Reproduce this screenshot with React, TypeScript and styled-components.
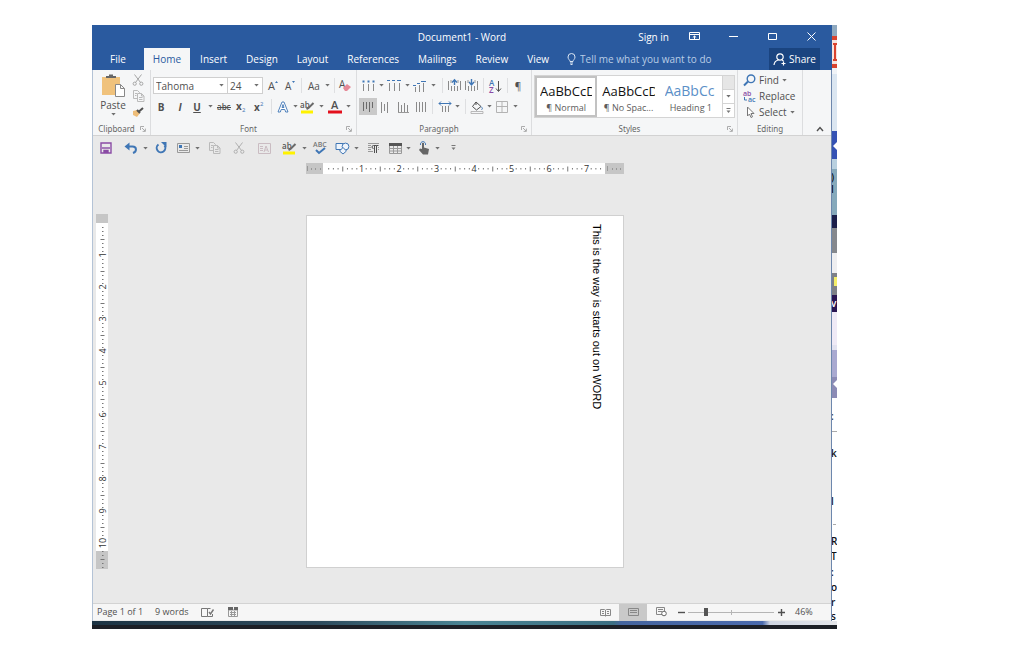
import React from "react";
import styled, { createGlobalStyle } from "styled-components";

const GlobalStyle = createGlobalStyle`
  *, *::before, *::after { box-sizing: border-box; }
  body { margin: 0; background: #fff; }
  button, input, select { font: inherit; color: inherit; }
`;

const blue = "#2a5a9f";
const ink = "#505050";
const accent = "#3f76b5";

/* ---------- frame ---------- */

const Desktop = styled.div`
  display: grid;
  grid-template-columns: minmax(0, 1fr) 5px;
  margin: 25px 187px 33px 92px;
  font-family: "Open Sans", "Noto Sans", sans-serif;
  font-size: 10px;
  line-height: 14px;
  color: ${ink};
  overflow: hidden;
`;

const AppWindow = styled.div`
  display: flex;
  flex-direction: column;
  min-width: 0;
  background: #e9e9e9;
  border-left: 1px solid #b4c3d6;
  border-right: 1px solid #6d87ad;
`;

const Backdrop = styled.div`
  overflow: hidden;
  svg { display: block; }
`;

const Taskbar = styled.div`
  grid-column: 1 / -1;
  height: 8px;
  border-bottom: 4px solid #1c1f26;
  background: linear-gradient(90deg, #1d3444 0, #2d4a5c 30%, #4a8494 50%, #3c6f83 70%, #45659f 71%, #4a6aae 90%, #cfd5e2 91%, #e4e6ea 100%);
`;

/* ---------- header ---------- */

const Header = styled.header`
  background: ${blue};
  color: #fff;
  margin: 0 -1px;
`;

const TitleBar = styled.div`
  display: grid;
  grid-template-columns: 1fr auto 1fr;
  align-items: center;
  height: 23px;
`;

const Title = styled.h1`
  grid-column: 2;
  margin: 0;
  font-size: 10px;
  font-weight: 400;
  line-height: 14px;
`;

const WindowTools = styled.div`
  display: flex;
  justify-content: flex-end;
  align-items: center;
  padding-right: 7px;
`;

const FlatButton = styled.button<{ $w?: number }>`
  display: flex;
  align-items: center;
  justify-content: center;
  flex: none;
  width: ${(p) => (p.$w ? p.$w + "px" : "auto")};
  height: 20px;
  padding: 0;
  border: 0;
  background: none;
  white-space: nowrap;
`;

const TabBar = styled.nav`
  display: flex;
  align-items: stretch;
  height: 22px;
`;

const Tab = styled.button<{ $active?: boolean; $wide?: boolean }>`
  flex: none;
  padding: 0 ${(p) => (p.$wide ? 18 : 9)}px;
  border: 0;
  background: ${(p) => (p.$active ? "#f5f6f7" : "none")};
  color: ${(p) => (p.$active ? blue : "#fff")};
  & + & { margin-right: 1px; }
`;

const TellMe = styled.label`
  display: flex;
  flex: 1;
  align-items: center;
  gap: 4px;
  min-width: 0;
  padding-left: 8px;
  color: #c8d8ec;
  input {
    flex: 1;
    min-width: 0;
    padding: 0;
    border: 0;
    outline: 0;
    background: none;
  }
  input::placeholder { color: #b9cde6; opacity: 1; }
`;

const Share = styled.button`
  display: flex;
  align-items: center;
  justify-content: center;
  gap: 2px;
  width: 51px;
  margin-right: 12px;
  padding: 0;
  border: 0;
  background: #1a4480;
`;

/* ---------- ribbon ---------- */

const Ribbon = styled.div`
  display: flex;
  height: 66px;
  background: #f5f6f7;
  border-bottom: 1px solid #d2d2d2;
`;

const Group = styled.section<{ $w: number }>`
  display: flex;
  flex-direction: column;
  flex: none;
  width: ${(p) => p.$w}px;
  padding: 0 2px;
  border-right: 1px solid #dcdddf;
`;

const GroupBody = styled.div<{ $high?: boolean }>`
  display: flex;
  flex-direction: column;
  height: 52px;
  padding-top: ${(p) => (p.$high ? 2 : 5)}px;
`;

const GroupFoot = styled.div`
  display: flex;
  align-items: center;
  height: 13px;
  color: #666;
  font-family: "Noto Sans", "Open Sans", sans-serif;
  font-size: 8px;
  line-height: 12px;
  h2 { flex: 1; margin: 0; font: inherit; text-align: center; }
`;

const ToolRow = styled.div`
  display: flex;
  align-items: center;
  height: 21px;
`;

const Tool = styled.button<{ $w: number; $gap?: number; $on?: boolean }>`
  display: flex;
  align-items: center;
  justify-content: center;
  flex: none;
  width: ${(p) => p.$w}px;
  height: 17px;
  margin-left: ${(p) => p.$gap ?? 0}px;
  padding: 0;
  border: 0;
  background: ${(p) => (p.$on ? "#c9c9c9" : "none")};
  white-space: nowrap;
`;

const Split = styled.span<{ $w: number }>`
  display: flex;
  flex: none;
  justify-content: center;
  width: ${(p) => p.$w}px;
  &::before { content: ""; width: 1px; height: 15px; background: #dedfe1; }
`;

const Combo = styled.label<{ $w: number }>`
  display: flex;
  align-items: center;
  flex: none;
  width: ${(p) => p.$w}px;
  height: 17px;
  padding-right: 3px;
  border: 1px solid #cfcfcf;
  background: #fff;
  & + & { border-left: 0; }
  select {
    flex: 1;
    min-width: 0;
    padding: 0 2px;
    border: 0;
    appearance: none;
    background: none;
    line-height: 14px;
  }
`;

const ClipRow = styled.div`
  display: flex;
  gap: 2px;
  padding-left: 2px;
`;

const Paste = styled.button`
  display: flex;
  flex-direction: column;
  align-items: center;
  width: 32px;
  padding: 2px 0 0;
  border: 0;
  background: none;
  line-height: 15px;
`;

const ClipTools = styled.div`
  display: flex;
  flex-direction: column;
  button { height: 16px; }
`;

const Gallery = styled.div`
  display: flex;
  height: 43px;
  background: #fff;
  border: 1px solid #d4d4d4;
`;

const StyleCard = styled.button<{ $on?: boolean; $heading?: boolean }>`
  flex: 1;
  min-width: 0;
  padding: 4px 3px 0;
  border: 2px solid ${(p) => (p.$on ? "#c2c2c2" : "transparent")};
  background: none;
  overflow: hidden;
  text-align: center;
  strong {
    display: block;
    overflow: hidden;
    white-space: nowrap;
    text-align: left;
    font-weight: 400;
    font-size: ${(p) => (p.$heading ? 14 : 13)}px;
    line-height: 18px;
    color: ${(p) => (p.$heading ? "#5b8fc7" : "#111")};
  }
  span { display: block; white-space: nowrap; font-size: 9px; line-height: 15px; color: #5c5c5c; }
`;

const GalleryScroll = styled.div`
  display: flex;
  flex-direction: column;
  width: 12px;
  border-left: 1px solid #d4d4d4;
  button {
    display: flex;
    flex: 1;
    align-items: center;
    justify-content: center;
    padding: 0;
    border: 0;
    background: #fff;
  }
  button + button { border-top: 1px solid #d4d4d4; }
  button:first-child { background: #e6e6e6; }
`;

const EditTool = styled.button`
  display: flex;
  align-items: center;
  gap: 3px;
  height: 16px;
  padding: 0 3px;
  border: 0;
  background: none;
`;

const Collapse = styled.div`
  display: flex;
  flex: 1;
  align-items: flex-end;
  justify-content: flex-end;
  padding-right: 3px;
  button { height: 13px; }
`;

/* ---------- quick access ---------- */

const QuickBar = styled.div`
  display: flex;
  align-items: center;
  height: 24px;
  padding-left: 3px;
`;

/* ---------- workspace ---------- */

const Workspace = styled.main`
  display: grid;
  grid-template-columns: 15px minmax(0, 1fr);
  padding: 3px 10px 34px 0;
  svg { display: block; }
`;

const SideRuler = styled.div`
  padding: 51px 0 0 3px;
`;

const Canvas = styled.div`
  display: flex;
  flex-direction: column;
  align-items: center;
  gap: 41px;
`;

const Page = styled.article`
  width: 318px;
  height: 353px;
  padding: 8px 19px;
  border: 1px solid #d0d0d0;
  background: #fff;
  writing-mode: vertical-rl;
  font-family: "Liberation Sans", Arial, sans-serif;
  font-size: 11px;
  line-height: 14px;
  color: #000;
  p { margin: 0; white-space: nowrap; }
`;

/* ---------- status bar ---------- */

const StatusBar = styled.footer`
  display: flex;
  align-items: center;
  height: 17px;
  padding-left: 4px;
  border-top: 1px solid #d3d3d3;
  background: #f6f6f6;
  font-size: 9px;
  line-height: 14px;
`;

const StatusText = styled.span`
  margin-right: 12px;
  white-space: nowrap;
`;

const Spacer = styled.span`
  flex: 1;
`;

const Zoom = styled.input`
  appearance: none;
  width: 86px;
  height: 12px;
  margin: 0 1px;
  background: linear-gradient(#b5b5b5, #b5b5b5) center / 100% 1px no-repeat,
    linear-gradient(#b5b5b5, #b5b5b5) center / 1px 5px no-repeat;
  &::-webkit-slider-thumb {
    appearance: none;
    width: 4px;
    height: 8px;
    background: #555;
  }
`;

const ZoomValue = styled.span`
  width: 44px;
  padding-left: 8px;
`;

/* ---------- drawings ---------- */

const Drawing = styled.svg`
  flex: none;
  overflow: visible;
`;

type GlyphProps = { w?: number; h?: number; children: React.ReactNode; c?: string; s?: number };
const Glyph = ({ w = 14, h = 14, c = ink, s = 1, children }: GlyphProps) => (
  <Drawing width={w} height={h} viewBox={`0 0 ${w} ${h}`} fill="none" stroke={c} strokeWidth={s} aria-hidden="true">
    {children}
  </Drawing>
);

const Caret = () => (
  <Drawing width="5" height="3" viewBox="0 0 5 3" aria-hidden="true">
    <path d="M.3 0h4.400L2.500 2.500z" fill="#707070" />
  </Drawing>
);

const MoreMark = () => (
  <Glyph w={5} h={6} c="#777">
    <path d="M.5.500h4" />
    <path d="M.5 2.500h4L2.500 5z" fill="#777" stroke="none" />
  </Glyph>
);

const Launcher = () => (
  <Glyph w={6} h={6} c="#999" s={0.8}>
    <path d="M.5 4V.5H4M2 2l3 3M5.400 2.600v2.800H2.600" />
  </Glyph>
);

const Scissors = ({ c = "#a6a6a6" }: { c?: string }) => (
  <Glyph w={12} h={12} c={c}>
    <path d="M2.500.500 8.500 8.500M9.500.500 3.500 8.500" />
    <circle cx="2.700" cy="9.700" r="1.600" />
    <circle cx="9.300" cy="9.700" r="1.600" />
  </Glyph>
);

const Copy = () => (
  <Glyph w={13} h={12} c="#bababa">
    <path d="M5 8.500H1.500v-8h4l2 2V3M5.500 3.500h4l2.500 2.500v5.500H5.500zM9.500 3.500V6H12M3 3.500h2M3 5.500h1.500M7 7.500h3.500M7 9.500h3.500" />
  </Glyph>
);

const Highlighter = () => (
  <Glyph w={14} h={14}>
    <path d="M0 10.500h12v3H0z" fill="#fff200" stroke="none" />
    <text x="-1" y="8" fontSize="8" fontWeight="600" fill="#555" stroke="none">ab</text>
    <path d="M12.500 3 7.500 8l-2 1" stroke="#6a6a6a" strokeWidth="2" />
  </Glyph>
);

const bars = (list: number[][], color = "#8a8a8a") =>
  list.map(([x, y1, y2], i) => <path key={i} d={`M${x + 0.5} ${y1}V${y2}`} stroke={color} />);

const BulletList = () => (
  <Glyph>
    {bars([[2, 5, 12], [7, 5, 12], [12, 5, 12]])}
    <path d="M1.500 1.500h2v2h-2zM6.500 1.500h2v2h-2zM11.500 1.500h2v2h-2z" fill={accent} stroke="none" />
  </Glyph>
);
const NumberList = () => (
  <Glyph>
    {bars([[2, 4, 12], [7, 4, 12], [12, 4, 12]])}
    <path d="M0 1.500h3M5 1.500h3M10 1.500h4" stroke={accent} />
  </Glyph>
);
const MultiList = () => (
  <Glyph>
    {bars([[2, 8, 13], [6, 6, 13], [10, 4, 13]])}
    <path d="M0 6.500h3M4 4.500h3M8 2.500h5" stroke={accent} />
  </Glyph>
);
const Indent = ({ down }: { down?: boolean }) => (
  <Glyph w={13}>
    {bars([[0, 2, 11], [3, 7, 12], [6, 7, 12], [9, 7, 12], [12, 2, 11]])}
    <path d={down ? "M6.500 0v5.500M4 3l2.500 3L9 3" : "M6.500 6V1M4 3.500 6.500.8 9 3.500"} stroke={accent} strokeWidth="1.400" />
    <path d="M3 1v3M10 1v3" stroke="#999" />
  </Glyph>
);

const Save = () => (
  <Glyph w={12} h={12} c="#8a4ba5" s={1.400}>
    <path d="M1 1h10v10H1z" />
    <path d="M2 6h8" />
    <path d="M4 11V8.500h4V11" fill="#8a4ba5" />
  </Glyph>
);

const Shapes = () => (
  <Glyph w={15} h={14} c={accent}>
    <path d="M1 2.500h8v6H1z" fill="#eef4fb" />
    <circle cx="10.500" cy="5.500" r="3.400" fill="#eef4fb" />
    <path d="M8 6.500 11.500 10 8 13 4.500 10z" fill="#eef4fb" />
  </Glyph>
);

const TopRuler = () => {
  const unit = 37.5;
  const marks = [];
  for (let i = 1; i < 60; i++) {
    const x = 18 + (i * unit) / 8;
    if (i % 8 === 0) {
      marks.push(<text key={i} x={x} y="9" textAnchor="middle" fontSize="9" fill="#333">{i / 8}</text>);
    } else {
      const half = i % 4 === 0;
      marks.push(<path key={i} d={`M${x} ${half ? 3.5 : 5}v${half ? 5 : 1.5}`} stroke="#777" />);
    }
  }
  return (
    <svg width="318" height="11" viewBox="0 0 318 11" role="img" aria-label="Horizontal ruler">
      <path d="M0 0h318v11H0z" fill="#fff" />
      <path d="M0 0h17v11H0zM299 0h19v11h-19z" fill="#c6c6c6" />
      <path d="M1.500 3v5M5.500 5v2M9.500 5v2M14.500 5v2M301.500 3v5M306.500 5v2M310.500 5v2M314.500 5v2" stroke="#999" />
      {marks}
    </svg>
  );
};

const LeftRuler = () => {
  const unit = 32;
  const marks = [];
  for (let i = 1; i < 87; i++) {
    const y = 9 + (i * unit) / 8;
    if (i % 8 === 0) {
      marks.push(
        <text key={i} transform={`translate(10 ${y}) rotate(-90)`} textAnchor="middle" fontSize="9" fill="#333">{i / 8}</text>
      );
    } else if (i !== 79 && i !== 81) {
      const half = i % 4 === 0;
      marks.push(<path key={i} d={`M${half ? 4.5 : 6} ${y + 0.5}h${half ? 4 : 1.5}`} stroke="#777" />);
    }
  }
  return (
    <svg width="12" height="355" viewBox="0 0 12 355" role="img" aria-label="Vertical ruler">
      <path d="M0 0h12v355H0z" fill="#fff" />
      <path d="M0 0h12v9H0zM0 337h12v18H0z" fill="#c6c6c6" />
      {marks}
    </svg>
  );
};

const backdropBands: [number, number, string][] = [
  [0, 11, "#8fa9bf"], [11, 4, "#d9432f"], [15, 24, "#f6e3df"], [39, 4, "#d9432f"], [43, 6, "#f0f3f7"],
  [49, 57, "#dbe6f1"], [106, 28, "#3552b4"], [134, 10, "#b9d0df"], [144, 46, "#86a9bb"], [190, 13, "#1b1e4a"],
  [203, 25, "#85888d"], [228, 20, "#eeeef0"], [248, 22, "#7e8187"], [270, 17, "#2a1652"], [287, 33, "#efeaf6"],
  [320, 5, "#e2e2f0"], [325, 27, "#a9a9d0"], [352, 21, "#8c8bb5"], [373, 223, "#ffffff"],
];
const backdropText: [number, string, string][] = [
  [156, ")", "#111"], [168, "l", "#111"], [282, "v", "#fff"], [395, ":", "#333"], [432, "k", "#111"], [480, "l", "#222"],
  [520, "R", "#111"], [535, "T", "#111"], [551, ":", "#111"], [566, "o", "#111"], [581, "r", "#111"], [595, "s", "#111"],
];

const BackdropArt = () => (
  <svg width="5" height="596" viewBox="0 0 5 596" aria-hidden="true">
    {backdropBands.map(([y, h, c]) => <path key={y} d={`M0 ${y}h5v${h}H0z`} fill={c} />)}
    <path d="M1 19h4M1 35h4M3 19v16" stroke="#d9432f" strokeWidth="2" />
    <path d="M5 117 1 121l4 4zM5 355l-4 4 4 4z" fill="#fff" />
    <path d="M2 252h3v9H2z" fill="#f3ee6a" />
    <path d="M0 406.500h5M1 499.500h3" stroke="#aaa" />
    {backdropText.map(([y, t, c]) => (
      <text key={y} x="-1" y={y} fontSize="10" fontWeight="600" fill={c}>{t}</text>
    ))}
  </svg>
);

/* ---------- app ---------- */

const DropTool = ({ w = 8, gap, label }: { w?: number; gap?: number; label: string }) => (
  <Tool $w={w} $gap={gap} aria-label={label}><Caret /></Tool>
);

const tabs = ["File", "Home", "Insert", "Design", "Layout", "References", "Mailings", "Review", "View"];

const Foot = ({ label, launcher = true }: { label: string; launcher?: boolean }) => (
  <GroupFoot>
    <h2>{label}</h2>
    {launcher && <Tool $w={10} aria-label={`${label} settings`}><Launcher /></Tool>}
  </GroupFoot>
);

export default function App() {
  return (
    <>
      <GlobalStyle />
      <Desktop>
        <AppWindow>
          <Header>
            <TitleBar>
              <Title>Document1 - Word</Title>
              <WindowTools>
                <FlatButton>Sign in</FlatButton>
                <FlatButton $w={50} aria-label="Ribbon display options">
                  <Glyph w={11} h={9} c="#fff"><path d="M.5.500h10v7H.5zM.5 2.500h10M5.500 7V4M3.800 5.500 5.500 4l1.700 1.500" /></Glyph>
                </FlatButton>
                <FlatButton $w={29} aria-label="Minimize"><Glyph w={9} h={9} c="#fff"><path d="M0 4.500h9" /></Glyph></FlatButton>
                <FlatButton $w={49} aria-label="Maximize"><Glyph w={9} h={9} c="#fff"><path d="M.5 1.500h8v6H.5z" /></Glyph></FlatButton>
                <FlatButton $w={28} aria-label="Close"><Glyph w={9} h={9} c="#fff"><path d="m.5.500 8 8M8.500.500l-8 8" /></Glyph></FlatButton>
              </WindowTools>
            </TitleBar>
            <TabBar>
              {tabs.map((t) => <Tab key={t} $active={t === "Home"} $wide={t === "File"}>{t}</Tab>)}
              <TellMe>
                <Glyph w={9} h={12} c="#dbe6f3"><path d="M3 8.500C3 7 1 6.300 1 4a3.500 3.500 0 0 1 7 0c0 2.300-2 3-2 4.500zM3 10h3M3.500 11.500h2" /></Glyph>
                <input aria-label="Tell me what you want to do" placeholder="Tell me what you want to do" />
              </TellMe>
              <Share>
                <Glyph w={14} h={13} c="#fff" s={1.200}><circle cx="7" cy="4" r="3.200" /><path d="M1 12c.3-3 2-4.500 4.500-5M9 7l1.500 1M10.500 8.500v4M8.500 10.500h4" /></Glyph>
                Share
              </Share>
            </TabBar>
          </Header>

          <Ribbon>
            <Group $w={58}>
              <GroupBody $high>
                <ClipRow>
                  <Paste>
                    <Glyph w={24} h={24}>
                      <path d="M1 3h18v18H1z" fill="#f0c27c" stroke="none" />
                      <path d="M5 4V2h3V.5h4V2h3v2z" fill="#666" stroke="none" />
                      <path d="M14.500 10.500h5l4 4v8h-9zM19.500 10.500v4h4" fill="#fff" stroke="#888" />
                    </Glyph>
                    Paste
                    <Caret />
                  </Paste>
                  <ClipTools>
                    <Tool $w={14} aria-label="Cut"><Scissors /></Tool>
                    <Tool $w={14} aria-label="Copy"><Copy /></Tool>
                    <Tool $w={14} aria-label="Format painter">
                      <Glyph w={12} h={10}><path d="M1 4 5 3l3 3-3 4-4-2z" fill="#eebd78" stroke="none" /><path d="m5 3 3 3M7 4.500 11 1" strokeWidth="2" /></Glyph>
                    </Tool>
                  </ClipTools>
                </ClipRow>
              </GroupBody>
              <Foot label="Clipboard" />
            </Group>

            <Group $w={206}>
              <GroupBody>
                <ToolRow>
                  <Combo $w={75}><select aria-label="Font"><option>Tahoma</option></select><Caret /></Combo>
                  <Combo $w={35}><select aria-label="Font size"><option>24</option></select><Caret /></Combo>
                  <Tool $w={20} aria-label="Grow font"><Glyph w={10}><text x="0" y="11" fontSize="11" fill={ink} stroke="none">A</text><path d="m7 4 1.500-2L10 4z" fill={accent} stroke="none" /></Glyph></Tool>
                  <Tool $w={14} aria-label="Shrink font"><Glyph w={10}><text x="0" y="11" fontSize="10" fill={ink} stroke="none">A</text><path d="m7 2 1.500 2L10 2z" fill={accent} stroke="none" /></Glyph></Tool>
                  <Split $w={8} />
                  <Tool $w={18}>Aa</Tool>
                  <DropTool label="Change case" />
                  <Split $w={6} />
                  <Tool $w={16} aria-label="Clear formatting">
                    <Glyph w={12}><text x="0" y="9" fontSize="10" fill={ink} stroke="none">A</text><path d="m4 9 4-4 4 3-4 4H6z" fill="#e58a98" stroke="none" /></Glyph>
                  </Tool>
                </ToolRow>
                <ToolRow>
                  <Tool $w={16}><b>B</b></Tool>
                  <Tool $w={22}><b><i>I</i></b></Tool>
                  <Tool $w={12}><b><u>U</u></b></Tool>
                  <DropTool w={14} label="Underline style" />
                  <Tool $w={14} aria-label="Strikethrough"><Glyph><text x="0" y="10" fontSize="8" fontWeight="600" fill={ink} stroke="none">abc</text><path d="M0 7.500h14" /></Glyph></Tool>
                  <Tool $w={20} aria-label="Subscript"><Glyph w={10}><text x="0" y="10" fontSize="10" fontWeight="700" fill={ink} stroke="none">x</text><text x="6" y="12" fontSize="6" fill={accent} stroke="none">2</text></Glyph></Tool>
                  <Tool $w={16} aria-label="Superscript"><Glyph w={10}><text x="0" y="11" fontSize="10" fontWeight="700" fill={ink} stroke="none">x</text><text x="6" y="6" fontSize="6" fill={accent} stroke="none">2</text></Glyph></Tool>
                  <Split $w={8} />
                  <Tool $w={16} aria-label="Text effects"><Glyph w={12} c={accent}><path d="M1 12 5 2h2l4 10H8.700L7.800 9.500H4.200L3.300 12zM5 7.500h2L6 4.500z" fill="#fff" strokeWidth=".9" /></Glyph></Tool>
                  <DropTool label="Text effects menu" />
                  <Tool $w={18} aria-label="Highlight"><Highlighter /></Tool>
                  <DropTool label="Highlight colour" />
                  <Tool $w={20} aria-label="Font colour"><Glyph><text x="3" y="9" fontSize="11" fontWeight="600" fill={ink} stroke="none">A</text><path d="M0 10.500h14v3H0z" fill="#e3101c" stroke="none" /></Glyph></Tool>
                  <DropTool w={6} label="Font colour menu" />
                </ToolRow>
              </GroupBody>
              <Foot label="Font" />
            </Group>

            <Group $w={175}>
              <GroupBody>
                <ToolRow>
                  <Tool $w={18} aria-label="Bullets"><BulletList /></Tool>
                  <DropTool label="Bullet styles" />
                  <Tool $w={18} aria-label="Numbering"><NumberList /></Tool>
                  <DropTool label="Numbering styles" />
                  <Tool $w={18} aria-label="Multilevel list"><MultiList /></Tool>
                  <DropTool label="List styles" />
                  <Split $w={10} />
                  <Tool $w={14} aria-label="Decrease indent"><Indent /></Tool>
                  <Tool $w={20} aria-label="Increase indent"><Indent down /></Tool>
                  <Split $w={4} />
                  <Tool $w={20} aria-label="Sort">
                    <Glyph w={12}><text x="0" y="7" fontSize="8" fontWeight="600" fill={accent} stroke="none">A</text><text x="0" y="14" fontSize="8" fontWeight="600" fill="#8a4ba5" stroke="none">Z</text><path d="M9.500 2v10M7 9.500l2.500 3 2.500-3" /></Glyph>
                  </Tool>
                  <Split $w={4} />
                  <Tool $w={18}>¶</Tool>
                </ToolRow>
                <ToolRow>
                  <Tool $w={18} $on aria-label="Align top"><Glyph w={12}>{bars([[1, 2, 11], [4, 2, 9], [7, 2, 12], [10, 2, 8]], "#6a6a6a")}</Glyph></Tool>
                  <Tool $w={16} aria-label="Align middle"><Glyph w={10}>{bars([[1, 2, 13], [4, 4, 11], [7, 2, 13]])}</Glyph></Tool>
                  <Tool $w={20} aria-label="Align bottom"><Glyph w={13}>{bars([[1, 2, 12], [4, 5, 12], [7, 3, 12], [10, 5, 12]])}<path d="M1 12.500h11" stroke="#999" /></Glyph></Tool>
                  <Tool $w={14} aria-label="Justify"><Glyph w={11}>{bars([[1, 2, 12], [4, 2, 12], [7, 2, 12], [10, 2, 12]])}</Glyph></Tool>
                  <Split $w={10} />
                  <Tool $w={16} aria-label="Line spacing"><Glyph w={14}>{bars([[4, 6, 12], [7, 6, 12], [10, 6, 12]])}<path d="M1 3.500h12M3 1.500l-2 2 2 2M11 1.500l2 2-2 2" stroke={accent} /></Glyph></Tool>
                  <DropTool label="Spacing options" />
                  <Split $w={8} />
                  <Tool $w={16} aria-label="Shading"><Glyph><path d="m6 2 5 4.500L6.500 10 2.500 6.500zM6 2v3" /><path d="M11 6.500c2 2 1.500 3 .5 3" stroke={accent} /><path d="M1 11.500h12v2H1z" stroke="#aaa" strokeWidth=".8" /></Glyph></Tool>
                  <DropTool label="Shading colour" />
                  <Tool $w={18} aria-label="Borders"><Glyph w={12} h={12} c="#b3b3b3"><path d="M.5.500h11v11H.5zM.5 5.500h11M6 .5v11" /></Glyph></Tool>
                  <DropTool label="Border styles" />
                </ToolRow>
              </GroupBody>
              <Foot label="Paragraph" />
            </Group>

            <Group $w={206}>
              <GroupBody>
                <Gallery>
                  <StyleCard $on><strong>AaBbCcD</strong><span>¶ Normal</span></StyleCard>
                  <StyleCard><strong>AaBbCcD</strong><span>¶ No Spac...</span></StyleCard>
                  <StyleCard $heading><strong>AaBbCc</strong><span>Heading 1</span></StyleCard>
                  <GalleryScroll>
                    <button aria-label="Previous styles" />
                    <button aria-label="Next styles"><Caret /></button>
                    <button aria-label="More styles"><MoreMark /></button>
                  </GalleryScroll>
                </Gallery>
              </GroupBody>
              <Foot label="Styles" />
            </Group>

            <Group $w={65}>
              <GroupBody $high>
                <EditTool>
                  <Glyph w={13} h={12} c={accent} s={1.400}><circle cx="8" cy="4.800" r="3.800" /><path d="m5 7.500-4 4" strokeWidth="2" /></Glyph>
                  <span>Find</span><Caret />
                </EditTool>
                <EditTool>
                  <Glyph w={13} h={13}><text x="0" y="6" fontSize="7" fontWeight="600" fill="#8a4ba5" stroke="none">ab</text><text x="5" y="12" fontSize="7" fontWeight="600" fill={accent} stroke="none">ac</text><path d="M1.500 7v3H4" stroke={accent} /></Glyph>
                  <span>Replace</span>
                </EditTool>
                <EditTool>
                  <Glyph w={13} h={12} c="#777"><path d="M4.500 1v9l2-2 1.500 3.500 1.500-.700L8 7.500h3z" fill="#fff" /></Glyph>
                  <span>Select</span><Caret />
                </EditTool>
              </GroupBody>
              <Foot label="Editing" launcher={false} />
            </Group>
            <Collapse>
              <Tool $w={16} aria-label="Collapse the ribbon"><Glyph w={8} h={6} s={1.400}><path d="m1 5 3-3.500L7 5" /></Glyph></Tool>
            </Collapse>
          </Ribbon>

          <QuickBar>
            <Tool $w={20} aria-label="Save"><Save /></Tool>
            <Tool $w={14} $gap={8} aria-label="Undo"><Glyph c={accent} s={2}><path d="M3 5.500h5.500c4.500 0 4.500 5 .5 6.500" /><path d="M5.500 1.500v8L.5 5.500z" fill={accent} stroke="none" /></Glyph></Tool>
            <DropTool gap={3} label="Undo history" />
            <Tool $w={14} $gap={5} aria-label="Redo"><Glyph c={accent} s={2}><path d="M4.500 3.500a4.300 4.300 0 1 0 6 1" /><path d="M7 1h5.500v5.500z" fill={accent} stroke="none" /></Glyph></Tool>
            <Tool $w={14} $gap={8} aria-label="Text box"><Glyph w={13} h={10} c="#999"><path d="M.5.500h12v9H.5zM7 3.500h4M7 5.500h4M2 7.500h9" /><path d="M2 2h3v3H2z" fill={accent} stroke="none" /></Glyph></Tool>
            <DropTool gap={3} label="Text box styles" />
            <Tool $w={14} $gap={6} aria-label="Copy"><Copy /></Tool>
            <Tool $w={14} $gap={11} aria-label="Cut"><Scissors c="#b0b0b0" /></Tool>
            <Tool $w={14} $gap={11} aria-label="Frame text"><Glyph w={13} h={11} c="#cabcc2"><path d="M.5.500h12v10H.5zM2 3.500h3M2 5.500h3M2 7.500h3M6 9l2-6 2.500 6M7 7h2.500" /></Glyph></Tool>
            <Tool $w={16} $gap={11} aria-label="Highlight"><Highlighter /></Tool>
            <DropTool gap={2} label="Highlight colour" />
            <Tool $w={14} $gap={5} aria-label="Spelling"><Glyph w={14} h={14}><text x="0" y="6" fontSize="7" fontWeight="600" fill="#777" stroke="none">ABC</text><path d="m3 9 3 3 6-5" stroke={accent} strokeWidth="2" /></Glyph></Tool>
            <Tool $w={16} $gap={7} aria-label="Shapes"><Shapes /></Tool>
            <DropTool gap={2} label="Shape list" />
            <Tool $w={14} $gap={6} aria-label="Paragraph settings"><Glyph w={13}><path d="M1 2.500h11M1 4.500h3M1 6.500h3M1 8.500h3M1 10.500h5M11 6.500h1M11 8.500h1" stroke="#999" /><path d="M7.500 12V4.500M9.500 12V4.500h2M9.500 4.500h-3a1.500 1.500 0 0 0 0 3" /></Glyph></Tool>
            <Tool $w={14} $gap={8} aria-label="Table"><Glyph w={13} h={11}><path d="M.5.500h12v10H.5zM.5 5.500h12M.5 8h12M4.500 3v7.500M8.500 3v7.500" stroke="#999" /><path d="M0 0h13v3H0z" fill="#555" stroke="none" /></Glyph></Tool>
            <DropTool gap={2} label="Table sizes" />
            <Tool $w={14} $gap={5} aria-label="Touch mode"><Glyph w={12} h={13}><path d="M4 1v6L2 6.500 1 8l4 4.500h5L11 7 6 5.500V1z" fill="#666" stroke="none" /><path d="M2.500 3a2.600 2.600 0 1 1 5 0" stroke={accent} /></Glyph></Tool>
            <DropTool gap={2} label="Touch options" />
            <Tool $w={8} $gap={8} aria-label="Customize quick access"><MoreMark /></Tool>
          </QuickBar>

          <Workspace>
            <SideRuler><LeftRuler /></SideRuler>
            <Canvas>
              <TopRuler />
              <Page><p>This is the way is starts out on WORD</p></Page>
            </Canvas>
          </Workspace>

          <StatusBar>
            <StatusText>Page 1 of 1</StatusText>
            <StatusText>9 words</StatusText>
            <Tool $w={14} aria-label="Proofing"><Glyph w={13} h={10} c="#777"><path d="M6.500 1.500v8M6.500 9.500H.5v-8h6M6.500 1.500h3M6.500 9.500h5V7" /><path d="m8 5 1.500 2L12.500 2.500" strokeWidth="1.400" /></Glyph></Tool>
            <Tool $w={38} aria-label="Macros"><Glyph w={11} h={10}><path d="M.5 3h9v6.500h-9zM2 5.500h6M2 7.500h6M3.500 4v5M6.500 4v5" stroke="#999" /><path d="M0 0h5v3H0zM6 0h4v3H6z" fill="#666" stroke="none" /></Glyph></Tool>
            <Spacer />
            <Tool $w={28} aria-label="Read mode"><Glyph w={11} h={9}><path d="M.5 1.500h4l1 .8 1-.8h4v6H.5zM5.500 2v6.500M2 3.500h2M2 5.500h2M7 3.500h2M7 5.500h2" stroke="#888" /></Glyph></Tool>
            <Tool $w={28} $on aria-label="Print layout"><Glyph w={11} h={9}><path d="M.5.500h10v7H.5zM2 2.500h7M2 4.500h7" stroke="#888" /></Glyph></Tool>
            <Tool $w={28} aria-label="Web layout"><Glyph w={11} h={10}><path d="M6 7.500H.5v-7h8V4M2 2.500h5M2 4.500h4" stroke="#888" /><circle cx="8" cy="6.500" r="2.300" fill="#fff" stroke="#666" /></Glyph></Tool>
            <Tool $w={12} aria-label="Zoom out"><Glyph w={7} h={7} s={1.400}><path d="M0 3.500h7" /></Glyph></Tool>
            <Zoom type="range" aria-label="Zoom" min={0} max={100} defaultValue={20} />
            <Tool $w={12} aria-label="Zoom in"><Glyph w={7} h={7} s={1.400}><path d="M0 3.500h7M3.500 0v7" /></Glyph></Tool>
            <ZoomValue>46%</ZoomValue>
          </StatusBar>
        </AppWindow>
        <Backdrop><BackdropArt /></Backdrop>
        <Taskbar />
      </Desktop>
    </>
  );
}
